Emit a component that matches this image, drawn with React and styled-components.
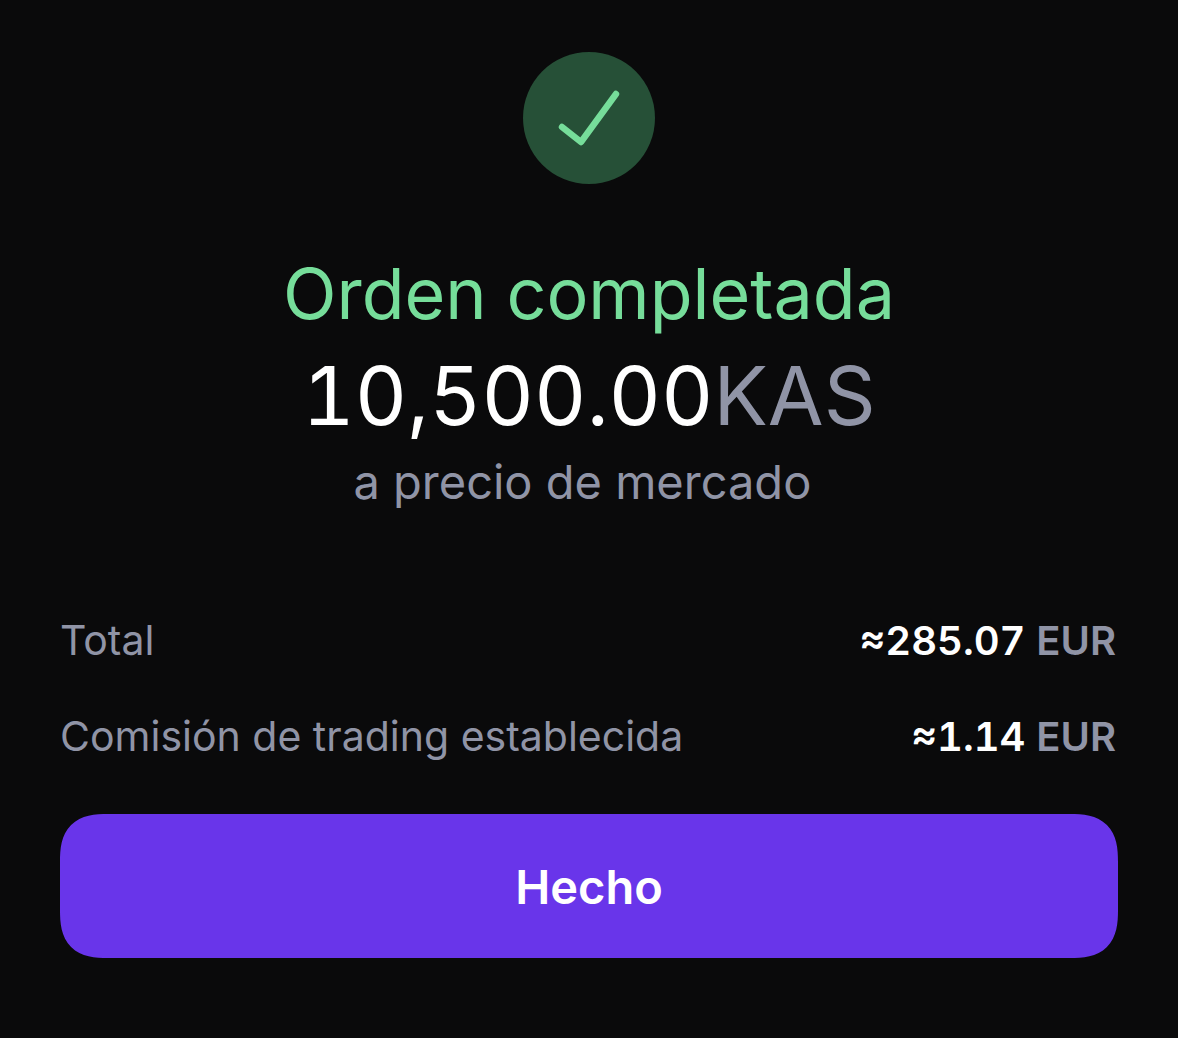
import styled, { createGlobalStyle } from 'styled-components';

const GlobalStyle = createGlobalStyle`
*{
    box-sizing:border-box;
}
body{
    margin:0;
    background:#0a0a0b;
    font-family:'Inter', 'Liberation Sans', sans-serif;
}
`

const costs = [
    { label: 'Total', amount: '≈285.07', currency: 'EUR' },
    { label: 'Comisión de trading establecida', amount: '≈1.14', currency: 'EUR' },
];

const App = ()=>{
    return <>
        <GlobalStyle/>
        <StyledOrderPage>
            <StatusBadge>
                <svg width="132" height="132" viewBox="0 0 132 132" fill="none" aria-hidden="true">
                    <path d="M39 75L58 90L93 42" stroke="#76dd9a" strokeWidth="6.4" strokeLinecap="round" strokeLinejoin="round"/>
                </svg>
            </StatusBadge>
            <Title>Orden completada</Title>
            <Amount>10,500.00<Unit>KAS</Unit></Amount>
            <PriceNote>a precio de mercado&nbsp;</PriceNote>
            <CostList>
                {costs.map(({ label, amount, currency })=>(
                    <CostRow key={label}>
                        <dt>{label}</dt>
                        <dd>{amount} <Unit>{currency}</Unit></dd>
                    </CostRow>
                ))}
            </CostList>
            <DoneButton type='button'>Hecho</DoneButton>
        </StyledOrderPage>
    </>
};

export default App;

const StyledOrderPage = styled.main`
display:flex;
flex-direction:column;
align-items:center;
padding:52px 60px 80px;
color:#fff;
`

const StatusBadge = styled.div`
width:132px;
height:132px;
border-radius:50%;
background:#265037;
`

const Title = styled.h1`
margin:64px 0 0;
font-size:70px;
line-height:92px;
font-weight:400;
color:#76dd9a;
`

const Amount = styled.p`
margin:4px 0 0;
font-size:81px;
line-height:104px;
font-variant-numeric:tabular-nums;
`

const Unit = styled.span`
color:#9094a6;
`

const PriceNote = styled.p`
margin:0;
font-size:47px;
line-height:68px;
color:#9094a6;
`

const CostList = styled.dl`
width:100%;
margin:76px 0 0;
`

const CostRow = styled.div`
display:flex;
justify-content:space-between;
align-items:center;
height:96px;
font-size:41px;
    dt{
        color:#9094a6;
    }
    dd{
        margin:0;
        padding-right:2px;
        font-size:40px;
        font-weight:600;
        font-variant-numeric:tabular-nums;
    }
`

const DoneButton = styled.button`
width:100%;
height:144px;
margin-top:30px;
border:0;
border-radius:48px;
corner-shape:superellipse(1.4);
background:#6935ea;
color:#fff;
font-family:inherit;
font-size:47px;
font-weight:600;
cursor:pointer;
`
